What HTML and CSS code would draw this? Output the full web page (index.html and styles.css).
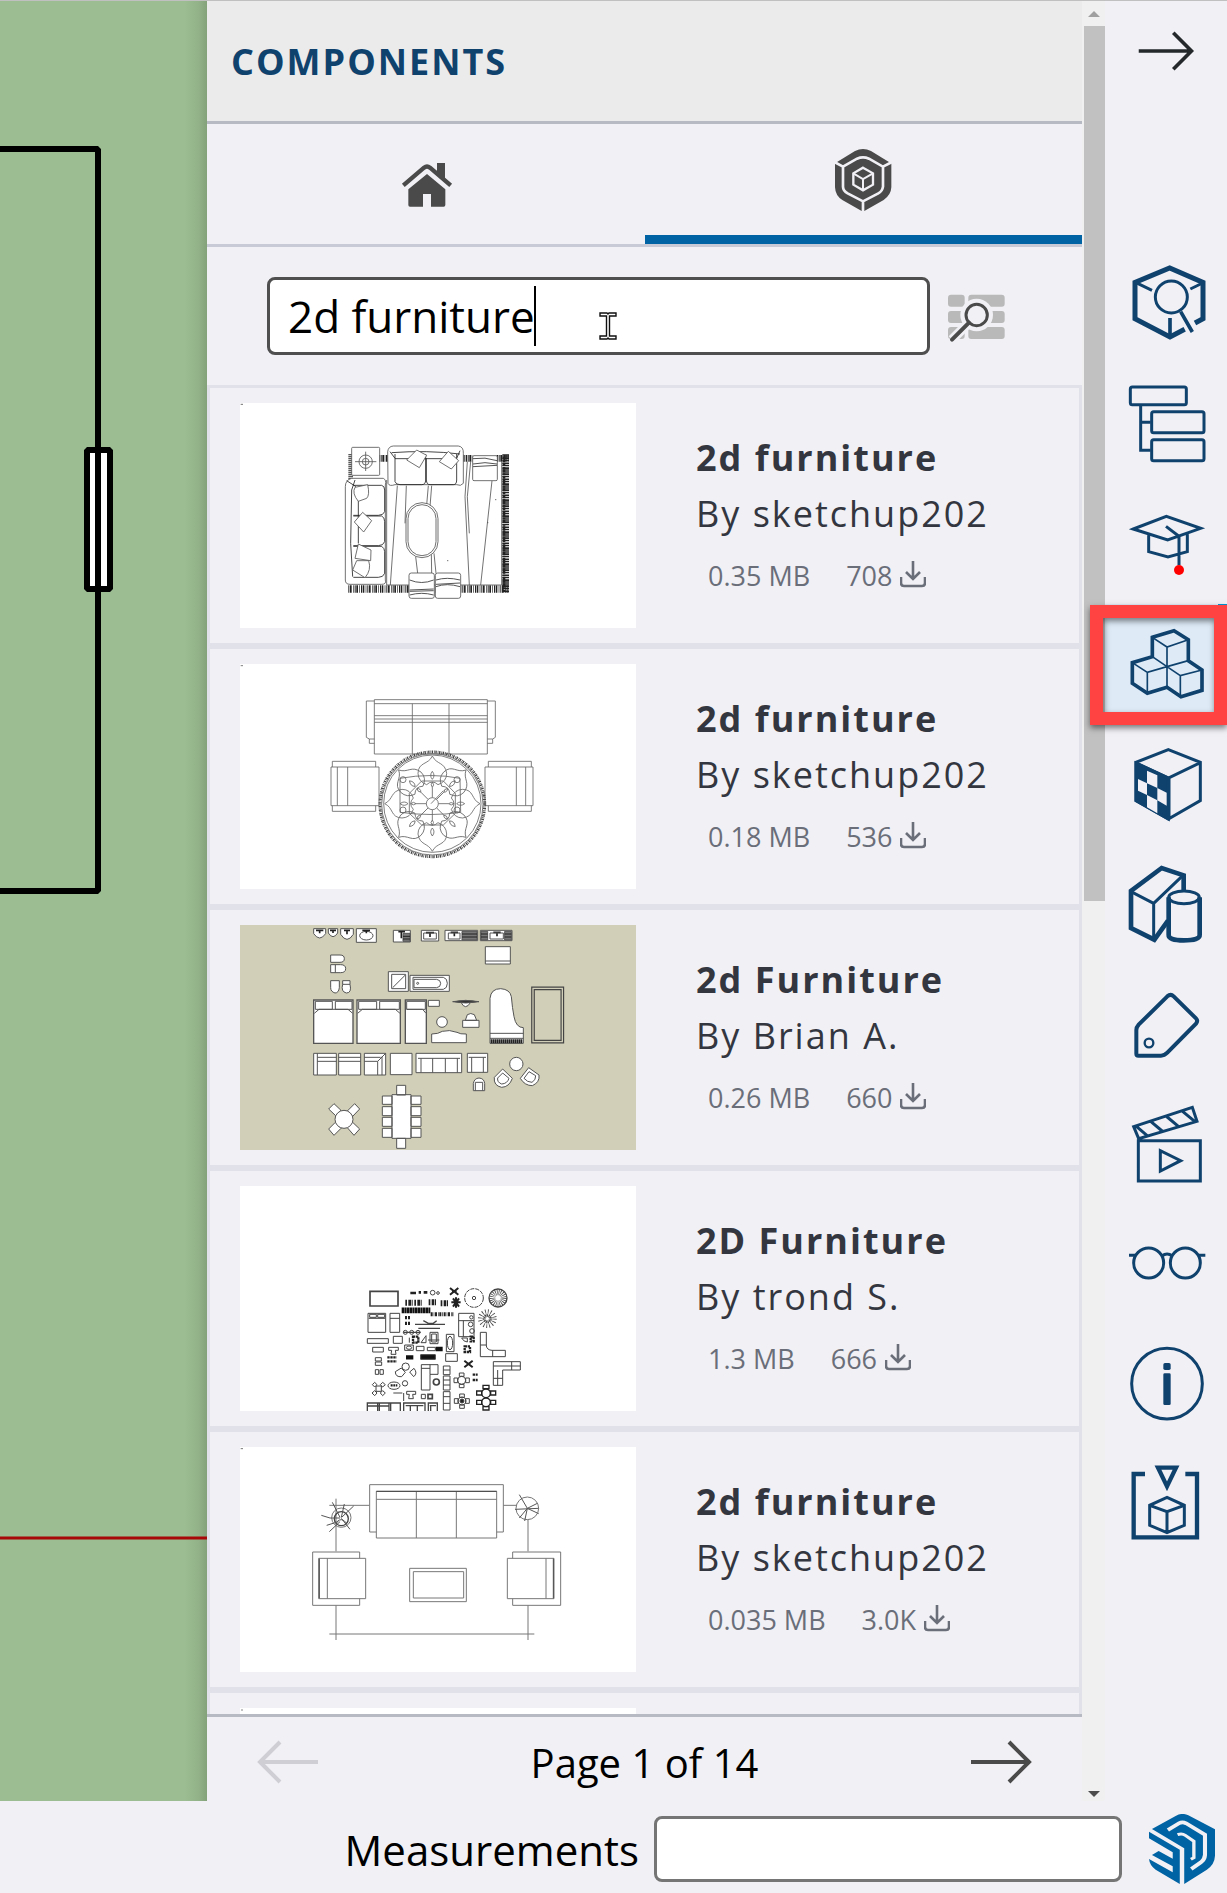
FILE: index.html
```html
<!DOCTYPE html>
<html lang="en">
<head>
<meta charset="utf-8">
<meta name="viewport" content="width=device-width, initial-scale=1">
<title>Components</title>
<link rel="stylesheet" href="styles.css">
</head>
<body>
<svg class="sprite" aria-hidden="true">
  <symbol id="download" viewBox="0 0 26 30"><path d="M13 0V18M6 11L13 18L20 11M1 16V22Q1 25 4 25H22Q25 25 25 22V16" fill="none" stroke="currentColor" stroke-width="2.6"/></symbol>
  <symbol id="arrow" viewBox="0 0 60 44"><path d="M0 22H57M38 2L58 22L38 42" fill="none" stroke="currentColor" stroke-width="4"/></symbol>
</svg>
<div class="app">
  <div class="workspace">
    <main class="canvas">
      <svg class="drawing" role="img" aria-label="Floor plan">
        <path d="M0 148H98V890H0" fill="none" stroke="#000" stroke-width="6" stroke-linejoin="bevel"/>
        <rect x="87" y="449" width="23" height="139" fill="#fff" stroke="#000" stroke-width="6" stroke-linejoin="bevel"/>
        <path d="M98 446V592" stroke="#000" stroke-width="6"/>
        <path d="M0 1537H600" stroke="#a80808" stroke-width="3"/>
      </svg>
    </main>

    <section class="panel">
      <header class="panel-header"><h1>COMPONENTS</h1></header>
      <nav class="tabs">
        <button class="tab" aria-label="Home">
          <svg viewBox="609 438 198 201" width="66" height="67" fill="#4a4a4a">
            <path d="M640 556L702 503Q711 496 720 503L782 556" fill="none" stroke="#4a4a4a" stroke-width="13"/>
            <path d="M741 489H765V536L741 516ZM711 522L766 568V615Q766 620 761 620H723V582H699V620H660Q655 620 655 615V568Z"/>
          </svg>
        </button>
        <button class="tab active" aria-label="3D Warehouse">
          <svg viewBox="387 438 198 201" width="66" height="67">
            <path d="M402 490L407 487L462 453Q486 441 510 453L565 487L571 490V562Q570 585 548 600L486 635L424 600Q403 587 402 562Z" fill="#4a4a4a"/>
            <g fill="none" stroke="#f1f0f5" stroke-width="8">
              <path d="M426 500L468 476Q486 468 504 476L546 500V560Q544 574 532 580L486 604L440 580Q426 572 426 560ZM400 486L426 500M573 486L546 500M486 604V637"/>
              <path d="M486 503L516 520V554L486 571L457 554V520Z" stroke-width="7"/>
              <path d="M457 520L486 537L516 520M486 537V571" stroke-width="6"/>
            </g>
          </svg>
        </button>
      </nav>

      <form class="search">
        <div class="search-field">
          <input type="text" value="2d furniture" aria-label="Search components">
          <span class="caret"></span>
          <svg class="ibeam" viewBox="0 0 18 28" width="18" height="28"><path d="M1 1H8L9 2L10 1H17V4H10.500V24H17V27H10L9 26L8 27H1V24H7.500V4H1Z" fill="#fff" stroke="#111" stroke-width="1.400"/></svg>
        </div>
        <button class="filter" type="button" aria-label="Advanced search">
          <svg viewBox="738 867 171 162" width="57" height="54">
            <g fill="#b9b9b9"><rect x="738" y="884" width="50" height="36" rx="9"/><rect x="799" y="884" width="109" height="36" rx="9"/><rect x="738" y="933" width="50" height="36" rx="9"/><rect x="799" y="933" width="109" height="36" rx="9"/><rect x="738" y="981" width="50" height="36" rx="9"/><rect x="799" y="981" width="109" height="36" rx="9"/></g>
            <circle cx="824" cy="945" r="49" fill="#f1f0f5"/><path d="M801 968L750 1019" stroke="#f1f0f5" stroke-width="28"/>
            <circle cx="824" cy="945" r="32" fill="none" stroke="#4a4a4a" stroke-width="9"/><path d="M801 968L750 1019" stroke="#4a4a4a" stroke-width="12" stroke-linecap="round"/>
          </svg>
        </button>
      </form>

      <div class="results">
        <article class="card">
          <svg class="thumb" viewBox="30 39 1188 675" fill="none" stroke="#555" stroke-width="2.5">
            <rect x="30" y="39" width="1188" height="675" fill="#fff" stroke="none"/>
            <g stroke="#222"><path d="M827 193V608" stroke-width="20" stroke-dasharray="4 2 2 1 5 2"/><path d="M822 200V604" stroke-width="8" stroke-dasharray="9 3 5 2"/><path d="M355 597H836" stroke-width="22" stroke-dasharray="3 2 5 4 2 3"/><path d="M446 205H480M696 205H728M800 205H836" stroke-width="20" stroke-dasharray="5 2 2 2"/><path d="M362 193V268" stroke-width="14" stroke-dasharray="3 3"/></g>
            <path d="M470 585H815V215M470 585V270M502 287L481 585M529 287L525 400M595 287L590 345M605 287L600 350M557 500L563 550M604 490L605 550M612 490L618 550M712 215L705 320L718 585M722 215L712 320L718 430M786 272L752 585"/>
            <g fill="#fff"><rect x="365" y="172" width="84" height="84" rx="3"/><rect x="728" y="197" width="74" height="75" rx="4"/>
            <path d="M473 185Q475 169 490 168H685Q701 170 700 190V280Q692 290 680 284H495Q478 290 474 280Z"/>
            <path d="M346 290Q346 270 365 265H460Q470 270 466 285V570Q470 583 455 583H360Q346 583 346 570Z"/>
            <rect x="528" y="338" width="96" height="165" rx="48"/><rect x="534" y="344" width="84" height="153" rx="42"/>
            <rect x="537" y="549" width="76" height="76" rx="7"/><rect x="616" y="549" width="76" height="76" rx="7"/></g>
            <path d="M375 215H439M407 185V243"/><circle cx="407" cy="215" r="20"/><circle cx="407" cy="215" r="10"/>
            <path d="M495 192V275Q498 284 510 284H575Q587 284 587 270V192M589 205V270Q590 284 600 284H670Q680 284 680 270V192M485 188Q590 180 690 192M495 206H680M480 185L495 205M690 182L680 205" stroke="#222"/>
            <g fill="#fff"><path d="M560 180L590 196L568 233L530 210ZM655 184L686 212L664 237L628 215Z"/></g>
            <path d="M370 286H455Q464 288 464 300V365Q460 376 445 376H370M370 378H455Q464 382 464 395V455Q460 467 445 467H370M370 469H455Q464 475 464 485V550Q460 562 445 562H370M375 270L365 300L362 460L368 560M385 300V460M350 272L378 290" stroke="#222"/>
            <g fill="#fff"><path d="M375 292L413 284Q420 315 410 325L385 334Q365 310 375 292ZM398 367L425 392L401 426L373 396ZM385 462L423 480L422 512L375 505ZM380 512H416Q425 540 405 563L368 540Z"/></g>
            <path d="M729 206Q765 200 801 212M729 222Q765 214 801 222M729 230L801 226M539 570Q575 585 611 570M539 600L611 597M539 604L611 602M539 615Q575 605 611 615M618 570Q650 560 690 570M618 583L690 579M618 590Q650 578 690 590" stroke="#333"/>
            <path d="M32 43H39M795 329H799M651 512H655M771 398H775"/>
          </svg>
          <div class="info"><h2>2d furniture</h2><p class="author">By sketchup202</p><p class="meta"><span>0.35 MB</span><span class="count">708<svg width="26" height="30"><use href="#download"/></svg></span></p></div>
        </article>

        <article class="card">
          <svg class="thumb" viewBox="30 42 1188 675" fill="none" stroke="#666" stroke-width="2.5">
            <rect x="30" y="42" width="1188" height="675" fill="#fff" stroke="none"/>
            <path d="M433 149H772V312H433ZM433 161H772M433 197H772M433 207H772M433 217H772M547 161V312M657 161V312M433 153H409V262L418 267V280H433M418 267H433M772 153H796V262L788 267V280H772M772 267H788"/>
            <path d="M303 351H447V467H303ZM307 351V334H437V351M307 467V484H437V467M322 351V467M353 351V467M765 351H909V467H765ZM775 351V334H904V351M775 467V484H904V467M859 351V467M887 351V467"/>
            <circle cx="607" cy="463" r="157" stroke="#444" stroke-width="9" stroke-dasharray="4 3 2 2"/><circle cx="607" cy="463" r="152"/><circle cx="607" cy="461" r="146"/>
            <defs><g id="petal"><path d="M607 318C595 345 565 335 564 370Q565 395 590 404Q607 388 624 404Q650 395 650 370C645 335 620 345 607 318Z"/><path d="M607 364Q617 377 607 388Q597 377 607 364ZM607 396Q615 405 607 412Q600 405 607 396ZM607 412V443"/></g></defs>
            <use href="#petal"/><use href="#petal" transform="rotate(45 607 461)"/><use href="#petal" transform="rotate(90 607 461)"/><use href="#petal" transform="rotate(135 607 461)"/><use href="#petal" transform="rotate(180 607 461)"/><use href="#petal" transform="rotate(225 607 461)"/><use href="#petal" transform="rotate(270 607 461)"/><use href="#petal" transform="rotate(315 607 461)"/>
            <circle cx="607" cy="461" r="18"/><path d="M510 385Q605 368 690 385L692 487Q605 500 510 487ZM575 393H640L676 430V490L640 525H575L538 490V430ZM603 461L640 422"/>
            <circle cx="519" cy="389" r="9"/><circle cx="681" cy="389" r="9"/><circle cx="519" cy="480" r="9"/><circle cx="681" cy="480" r="9"/><path d="M32 47H39"/>
          </svg>
          <div class="info"><h2>2d furniture</h2><p class="author">By sketchup202</p><p class="meta"><span>0.18 MB</span><span class="count">536<svg width="26" height="30"><use href="#download"/></svg></span></p></div>
        </article>

        <article class="card">
          <svg class="thumb" viewBox="30 30 1188 675" fill="#fff" stroke="#555" stroke-width="3">
            <rect x="30" y="30" width="1188" height="675" fill="#d1cfb8" stroke="none"/>
            <path d="M251 41H287V56Q269 82 251 56ZM295 41H323V54Q309 76 295 54ZM332 41H370V58Q351 88 332 58ZM379 41H439V82H379ZM490 46H541V81H490ZM574 46H626V78H574ZM645 46H743V77H645ZM751 46H846V77H751Z"/>
            <ellipse cx="409" cy="62" rx="20" ry="13"/><path d="M258 46H280M269 46V55M300 46H318M309 46V54M342 46H360M351 46V58M397 46H420M409 44V55M505 50H525M514 50V70M588 53H612M600 50V66M662 52H684M673 50V64M790 52H812M801 50V64" stroke="#222" stroke-width="5"/>
            <path d="M581 54H619V72H581ZM655 54H690V72H655ZM780 54H820V72H780Z" fill="none"/>
            <path d="M696 49H741V75H696ZM753 49H773V75H753ZM824 49H844V75H824ZM519 55H540V79H519Z" fill="#777"/><path d="M696 57H741M696 66H741M753 57H773M753 66H773M824 57H844M824 66H844M519 64H540M519 72H540" stroke="#222"/>
            <path d="M766 95H841V147H766ZM766 138H841M302 120H330Q343 120 343 131Q343 142 330 142H302ZM302 149H332Q347 149 347 161Q347 173 332 173H302ZM316 149V173M302 197H328V218Q326 234 315 234Q302 230 302 218ZM338 197H360V208Q366 234 349 234Q332 230 338 208ZM338 208H360"/>
            <path d="M475 170H535V229H475ZM485 178H527V221H485ZM488 218L525 181M540 181H658V229H540Z"/><path d="M549 187H640Q652 190 652 205Q652 220 640 223H549ZM552 193H620Q632 195 632 205Q632 217 620 218H552Z"/><circle cx="563" cy="205" r="3"/>
            <path d="M251 255H369V385H251ZM381 255H511V385H381ZM526 255H589V385H526Z" stroke-width="4"/>
            <path d="M256 259H307V283H256ZM316 259H366V283H316ZM386 259H440V283H386ZM449 259H508V283H449ZM530 259H586V283H530ZM253 295L267 283H354L368 295M383 295L397 283H496L510 295M530 283H578L588 295"/>
            <path d="M595 256H628V274H595ZM693 262Q706 288 722 262ZM698 316H747V337H698ZM706 316L712 299Q722 292 733 299L740 316ZM605 357Q625 357 637 349Q658 343 681 352Q690 358 709 357V383H605Z"/><path d="M668 260Q707 252 747 260Q707 268 668 260Z" fill="#333"/><circle cx="636" cy="321" r="16"/>
            <path d="M780 385V250Q783 221 812 221Q840 223 844 245Q847 280 852 305Q858 338 880 338V385ZM780 355H880M780 370H880"/><path d="M782 379H878" stroke="#222" stroke-width="12" stroke-dasharray="5 1"/>
            <path d="M909 220H997V380H909Z" fill="none" stroke="#444" stroke-width="11"/><path d="M909 220H997V380H909Z" fill="none" stroke="#d1cfb8" stroke-width="4"/>
            <path d="M251 415H319V480H251ZM262 415V480M262 427H319M262 439H319M326 415H392V480H326ZM326 427H392M326 439H392M403 415H467V480H403ZM403 427H452M403 439H443V480M456 425V480M443 439L467 415M481 415H546V479H481ZM558 415H695V473H558ZM564 430H690M573 430V473M608 430V473M646 430V473M682 430V473M712 415H773V472H712ZM716 427H768M725 427V472M760 427V472"/>
            <circle cx="859" cy="447" r="20"/><path d="M730 527V505Q733 490 747 489Q762 490 764 505V527ZM736 527V502H758V527"/><path d="M818 462L847 490Q838 516 815 517Q790 512 793 487ZM818 474L837 490Q832 506 815 507Q801 502 803 489ZM896 458L871 490Q884 512 907 512Q930 502 927 480ZM897 470L882 490Q892 502 906 502Q918 495 917 482Z"/>
            <path d="M312 566L333 586L317 602L296 582ZM374 566L389 582L368 604L352 588ZM296 642L316 622L333 640L312 661ZM352 638L368 622L389 642L372 661Z"/><circle cx="342" cy="613" r="27"/>
            <path d="M500 511H527V540H500ZM500 670H527V700H500ZM457 543H486V568H457ZM457 575H486V602H457ZM457 607H486V634H457ZM457 640H486V667H457ZM543 543H573V568H543ZM543 575H573V602H543ZM543 607H573V634H543ZM543 640H573V667H543ZM486 539H543V670H486Z"/>
          </svg>
          <div class="info"><h2>2d Furniture</h2><p class="author">By Brian A.</p><p class="meta"><span>0.26 MB</span><span class="count">660<svg width="26" height="30"><use href="#download"/></svg></span></p></div>
        </article>

        <article class="card">
          <svg class="thumb" viewBox="-300 -222 1188 675" fill="none" stroke="#444" stroke-width="3">
            <rect x="-300" y="-222" width="1188" height="675" fill="#fff" stroke="none"/>
            <path d="M90 94H174V138H90Z" stroke-width="5"/><path d="M84 160H137V217H84ZM86 175H135M89 163H109V172H89ZM113 163H134V172H113ZM150 160H179V217H150ZM150 175H179M82 236H145V250H82ZM160 229H187V250H160ZM98 262H130V276H98ZM146 262H175V271H166L168 283H153L155 271H146ZM317 281H352V304H317ZM194 255H220V271H194ZM229 259H252V272H229ZM270 217H294V251H270ZM275 222H289V246H275ZM319 223H342V275H319Z"/>
            <ellipse cx="330" cy="249" rx="8" ry="20"/><ellipse cx="207" cy="263" rx="8" ry="5"/>
            <path d="M185 151H271" stroke="#111" stroke-width="17" stroke-dasharray="7 1"/><path d="M272 163H340" stroke="#222" stroke-width="12" stroke-dasharray="6 3 2 2"/><path d="M287 267H308M242 291H286M198 292H220" stroke="#111" stroke-width="13"/><path d="M262 262H286V272H262ZM242 284H286V298H242Z"/>
            <path d="M196 128H245M266 127H288M302 130H325" stroke="#222" stroke-width="18" stroke-dasharray="5 4 8 2 3 5"/><path d="M211 99H228M236 97H243M251 97H262" stroke="#222" stroke-width="8"/>
            <path d="M330 84L355 104M355 84L330 104M336 94H350M334 127H362M339 115L357 140M357 115L339 140M348 112V143M373 302L398 322M398 302L373 322" stroke="#222" stroke-width="6"/>
            <circle cx="278" cy="98" r="7"/><circle cx="294" cy="99" r="4"/><circle cx="402" cy="114" r="28" stroke-dasharray="12 3"/><circle cx="402" cy="114" r="5"/>
            <circle cx="474" cy="114" r="27" stroke-width="4"/><circle cx="474" cy="114" r="17" stroke-width="18" stroke-dasharray="2 3"/><circle cx="442" cy="176" r="18" stroke-width="20" stroke-dasharray="2 5"/><circle cx="442" cy="176" r="9" stroke-width="8" stroke-dasharray="3 2"/>
            <path d="M195 173H210M195 190H210" stroke="#222" stroke-width="10" stroke-dasharray="6 3"/><path d="M225 193H315M235 205H300M250 182L265 190H280L290 182M190 217H242" stroke-width="4"/><circle cx="196" cy="217" r="6"/><circle cx="215" cy="217" r="6"/><circle cx="234" cy="217" r="6"/>
            <path d="M356 160H402V230H356ZM356 182H402M370 182V230M365 234H382V246Q370 245 365 234M421 217H439V258Q441 270 456 271H496V290H421ZM421 255H439M458 271V290M460 305H541V330H488V376H460ZM460 318H541M515 305V330M460 355H488M473 330V376"/><circle cx="394" cy="172" r="5"/><circle cx="392" cy="193" r="7"/><circle cx="396" cy="213" r="7"/>
            <path d="M374 259H390V276H374ZM392 230H401V244H392ZM219 230H235V248H219ZM142 292H170M142 304H170M398 344H413M398 360H413" stroke="#222" stroke-width="7" stroke-dasharray="7 2"/><path d="M208 233V248M243 248L258 227V248ZM264 240H298"/>
            <path d="M106 293H124V303H106ZM106 306H125V316H106ZM106 329H116V343H106ZM120 329H130V343H120ZM184 324L166 335Q166 352 185 350L196 337ZM209 336L222 325Q234 340 221 350Z"/><circle cx="197" cy="320" r="11"/>
            <path d="M244 314H294V343H270V390H244ZM244 325H270M270 314V343M310 318H330V344H310ZM310 348H330V390H310ZM310 395H330V450H310ZM310 330H330M310 360H330M310 375H330M310 410H330M310 430H330"/>
            <circle cx="289" cy="366" r="9" stroke-width="5"/><circle cx="195" cy="370" r="8"/><ellipse cx="162" cy="377" rx="18" ry="11"/><path d="M152 376H172" stroke="#222" stroke-width="7" stroke-dasharray="6 2"/>
            <path d="M104 367L111 374L104 381L97 374ZM128 367L136 374L128 381L121 374ZM104 392L111 399L104 407L96 399ZM128 392L136 399L128 407L121 399ZM108 378H124V394H108ZM160 399H187M191 399V423M200 394H227V403H218L220 416H206L208 403H200ZM244 403H256V416H244Z"/><path d="M264 403H277V416H264Z" stroke-width="5"/>
            <circle cx="365" cy="361" r="12"/><path d="M358 339H372V349H358ZM358 373H372V383H358ZM342 354H353V368H342ZM377 354H388V368H377ZM359 402H373V412H359ZM359 435H373V445H359ZM343 416H354V430H343ZM377 416H388V430H377Z"/><circle cx="366" cy="423" r="12"/><circle cx="366" cy="423" r="6" fill="#222"/>
            <g stroke="#222" stroke-width="4"><circle cx="438" cy="400" r="13"/><circle cx="438" cy="427" r="13"/><path d="M429 376H447V386H429ZM410 393H425V405H410ZM452 393H467V405H452ZM410 421H425V433H410ZM452 421H467V433H452ZM429 440H447V450H429Z"/></g>
            <path d="M82 453V429H181V453M113 431V453M118 431V453M147 431V453M152 431V453M84 438H147M191 453V429H255V453M197 437H250M211 437V453M232 437V453M265 453V429H292V453M269 437H288M272 437V453" stroke-width="4"/>
          </svg>
          <div class="info"><h2>2D Furniture</h2><p class="author">By trond S.</p><p class="meta"><span>1.3 MB</span><span class="count">666<svg width="26" height="30"><use href="#download"/></svg></span></p></div>
        </article>

        <article class="card">
          <svg class="thumb" viewBox="120 51 1188 675" fill="none" stroke="#777" stroke-width="3">
            <rect x="120" y="51" width="1188" height="675" fill="#fff" stroke="none"/>
            <path d="M529 306H509V164H910V306H890M529 184H890V324H529ZM529 208H890M649 184V324M769 184V324M388 226H508M910 226H949M408 206V364M984 268V364M408 526V630M984 526V630M388 612H1003"/>
            <path d="M479 385V366H338V526H479V506M356 385H497V506H356ZM382 385V506M938 385V366H1082V526H938V506M922 385H1062V506H922ZM1038 385V506M629 415H799V515H629ZM640 425H791V504H640Z"/>
            <path d="M529 184H890M358 386V505M1060 386V505" stroke="#444"/>
            <circle cx="982" cy="235" r="34"/><path d="M958 194L982 235M945 238L1016 235M982 235L1012 220M982 235L1016 251M982 235L958 264M982 235L974 273" stroke="#555"/>
            <circle cx="424" cy="263" r="29"/><circle cx="424" cy="266" r="21" stroke="#444" stroke-width="4"/><path d="M364 256L390 264H420M380 286L415 275M388 305L420 275M424 265L450 298M425 262L461 228M424 262L433 222M420 262L397 217M410 276Q425 260 440 280" stroke="#555"/><path d="M122 56H129"/>
          </svg>
          <div class="info"><h2>2d furniture</h2><p class="author">By sketchup202</p><p class="meta"><span>0.035 MB</span><span class="count">3.0K<svg width="26" height="30"><use href="#download"/></svg></span></p></div>
        </article>

        <article class="card">
          <svg class="thumb" viewBox="0 0 396 225"><rect width="396" height="225" fill="#fff"/><path d="M1 2H3" stroke="#888"/></svg>
        </article>
      </div>

      <footer class="pager">
        <button aria-label="Previous page" disabled><svg class="flip" width="62" height="44"><use href="#arrow"/></svg></button>
        <span>Page 1 of 14</span>
        <button aria-label="Next page"><svg width="62" height="44"><use href="#arrow"/></svg></button>
      </footer>
    </section>

    <div class="scrollbar" aria-hidden="true">
      <svg viewBox="0 0 23 25"><path d="M6 16L12 10L18 16Z" fill="#a0a0a0"/></svg>
      <div class="track"><div class="scroll-thumb"></div></div>
      <svg viewBox="0 0 23 25"><path d="M6 15L12 21L18 15Z" fill="#4c4c4c"/></svg>
    </div>

    <aside class="toolbar">
      <button class="collapse" aria-label="Collapse panel"><svg width="58" height="40"><use href="#arrow"/></svg></button>
      <button class="tool" aria-label="Entity info"><svg viewBox="75 12 366 360"><path d="M345 249L369 236V127L269 84L165 127V236L270 291L314 268" stroke-width="15"/><path d="M168 128L216 151M331 147L368 129"/><path d="M270 234V288M302 215L337 276" stroke-width="11"/><circle cx="274" cy="171" r="48"/></svg></button>
      <button class="tool" aria-label="Outliner"><svg viewBox="75 372 366 360"><rect x="151" y="441" width="168" height="53" rx="6"/><rect x="215" y="515" width="157" height="63" rx="6"/><rect x="215" y="599" width="157" height="63" rx="6"/><path d="M182 495V631H212M182 547H212"/></svg></button>
      <button class="tool" aria-label="Instructor"><svg viewBox="75 732 366 360"><path d="M160 867L259 829L362 865L263 900ZM206 882V935L264 951L322 935V880M258 859L297 889V975"/><circle cx="297" cy="990" r="15" fill="#f00" stroke="none"/></svg></button>
      <button class="tool selected" aria-label="Components"><svg viewBox="75 1092 366 360"><path d="M217 1192L282 1172L325 1199V1262L366 1290V1351L303 1370L261 1342L202 1360L157 1330V1268L217 1250Z" stroke-width="11"/><path d="M217 1192L261 1221L325 1199M261 1221V1342M157 1268L202 1297L261 1280L217 1250M202 1297V1360M325 1262L261 1280L301 1307L366 1290M301 1307V1370" stroke-width="5"/></svg><span class="marker"></span></button>
      <button class="tool" aria-label="Materials"><svg viewBox="75 -18 366 360"><path d="M168 99L265 144V267L168 212Z" fill="#10426e"/><path d="M265 59L361 97V212L265 267L168 212V97ZM168 99L265 144L361 98M267 144V267"/><path d="M201 122L232 136V174L201 160ZM174 147L201 160V195L174 182ZM232 174L260 188V227L232 211ZM201 195L232 211V250L201 232Z" fill="#f1f0f5" stroke="none"/></svg></button>
      <button class="tool" aria-label="Styles"><svg viewBox="75 342 366 360"><path d="M311 480V436L245 414L153 483V594L223 629L264 572" stroke-width="14"/><path d="M153 485L221 520L305 440M221 520V628"/><path d="M266 502V615Q265 631 311 631Q360 631 359 615V502" stroke-width="14"/><ellipse cx="312" cy="502" rx="46" ry="19"/></svg></button>
      <button class="tool" aria-label="Tags"><svg viewBox="75 702 366 360"><path d="M262 799Q272 790 281 799L348 865Q355 872 348 881L262 968Q253 977 243 977H175Q169 977 169 971V900Q169 892 176 884Z" stroke-width="12"/><circle cx="207" cy="939" r="13" stroke-width="7"/></svg></button>
      <button class="tool" aria-label="Scenes"><svg viewBox="75 1062 366 360"><path d="M161 1190L337 1132L351 1174L176 1226ZM170 1190L205 1220M212 1174L250 1206M258 1158L296 1190M305 1142L345 1175M175 1232H361V1353H175ZM241 1262V1323L302 1292Z"/></svg></button>
      <button class="tool" aria-label="Display"><svg viewBox="75 132 366 360"><circle cx="206" cy="309" r="45"/><circle cx="316" cy="309" r="45"/><path d="M147 286H166M356 286H376M246 288Q261 276 277 288"/></svg></button>
      <button class="tool" aria-label="Model info"><svg viewBox="75 492 366 360"><circle cx="261" cy="671" r="106"/><rect x="250" y="609" width="22" height="21" rx="5" fill="#10426e" stroke="none"/><rect x="250" y="640" width="22" height="95" rx="4" fill="#10426e" stroke="none"/></svg></button>
      <button class="tool" aria-label="3D print"><svg viewBox="75 852 366 360"><path d="M195 942H161V1132H351V942H316M234 923H288L261 979Z" stroke-width="13"/><path d="M261 1012L313 1036V1096L261 1118L209 1096V1036ZM209 1036L261 1055L313 1036M261 1055V1118"/></svg></button>
    </aside>
  </div>

  <footer class="status">
    <label for="measure">Measurements</label>
    <input id="measure" type="text">
    <svg class="logo" viewBox="1357 525 178 210" preserveAspectRatio="none" role="img" aria-label="SketchUp">
      <path d="M1365 570L1430 530Q1447 520 1463 529L1535 571V650Q1534 676 1513 692L1452 735V628ZM1357 578L1440 632V735L1375 692Q1359 680 1357 660L1421 700V682L1365 648L1383 636L1421 659V640L1357 598Z" fill="#0063a3"/>
      <path d="M1408 573L1438 553Q1447 547 1457 553L1508 587V648Q1507 661 1498 669L1471 690" fill="none" stroke="#f1f0f5" stroke-width="11"/>
      <path d="M1434 587Q1446 582 1455 589L1478 607V656L1470 661" fill="none" stroke="#f1f0f5" stroke-width="9"/>
    </svg>
  </footer>
</div>
</body>
</html>
```
FILE: styles.css
```css
* { box-sizing: border-box; }

body {
  margin: 0;
  background: #f1f0f5;
  color: #000;
  font-family: "Open Sans", "Noto Sans", sans-serif;
}

h1, h2, p { margin: 0; }

button {
  display: flex;
  align-items: center;
  justify-content: center;
  padding: 0;
  border: 0;
  background: none;
  color: #4a4a4a;
}

.sprite { display: none; }

.app {
  display: flex;
  flex-direction: column;
  height: 100vh;
  overflow: hidden;
  border-top: 1px solid #c0c0c0;
}

.workspace {
  flex: 1;
  min-height: 0;
  display: grid;
  grid-template-columns: minmax(0, 207fr) minmax(0, 875fr) 23px 122px;
  grid-template-rows: minmax(0, 1fr);
}

/* Drawing area */
.canvas {
  background: linear-gradient(to left, #84a27a, #92b188 8px, #9bbd91 22px);
}

.drawing {
  display: block;
  width: 100%;
  height: 100%;
}

/* Components panel */
.panel {
  display: flex;
  flex-direction: column;
  min-height: 0;
}

.panel-header {
  height: 123px;
  padding: 37px 24px;
  background: #ebebeb;
  border-bottom: 3px solid #b7b9c3;
}

.panel-header h1 {
  color: #10426e;
  font-size: 36px;
  line-height: 48px;
  letter-spacing: 2px;
}

.tabs {
  display: flex;
  border-bottom: 3px solid #c8cad6;
}

.tab {
  flex: 1;
  height: 120px;
  border-bottom: 9px solid transparent;
}

.tab.active { border-bottom-color: #0063a3; }

.search {
  display: flex;
  align-items: center;
  gap: 18px;
  padding: 30px 77px 30px 60px;
}

.search-field {
  position: relative;
  flex: 1;
}

input {
  font: inherit;
  color: #000;
  background: #fff;
  border-radius: 8px;
}

.search-field input {
  display: block;
  width: 100%;
  height: 78px;
  padding: 0 18px;
  border: 3px solid #4f4f4f;
  font-size: 44px;
}

.caret {
  position: absolute;
  left: 267px;
  top: 9px;
  width: 2px;
  height: 60px;
  background: #000;
}

.ibeam {
  position: absolute;
  left: 332px;
  top: 35px;
}

.results {
  flex: 1;
  min-height: 0;
  overflow: hidden;
}

.card {
  display: flex;
  gap: 60px;
  padding: 15px 30px;
  border: 3px solid #e1e1e9;
}

.thumb {
  flex: none;
  display: block;
  width: 396px;
  height: 225px;
}

.info {
  padding-top: 27px;
  color: #33363f;
  font-size: 36px;
  line-height: 56px;
  letter-spacing: 2px;
  white-space: nowrap;
}

.info h2 { font-size: inherit; }

.meta {
  display: flex;
  gap: 36px;
  padding: 6px 12px;
  color: #6a6e79;
  font-size: 27px;
  letter-spacing: normal;
}

.count {
  display: flex;
  align-items: center;
  gap: 8px;
}

.pager {
  flex: none;
  display: flex;
  align-items: center;
  justify-content: space-between;
  height: 87px;
  padding: 6px 50px 0;
  border-top: 3px solid #b7b9c3;
  font-size: 40px;
}

.pager button:disabled { color: #cfced5; }

.flip { transform: scaleX(-1); }

/* Scrollbar */
.scrollbar {
  display: flex;
  flex-direction: column;
  background: #f0f0f0;
}

.track {
  flex: 1;
  padding-left: 2px;
}

.scroll-thumb {
  height: 50%;
  background: #c1c1c1;
}

/* Right toolbar */
.collapse {
  width: 100%;
  height: 100px;
  margin-bottom: 143px;
  color: #25282b;
}

.tool {
  position: relative;
  width: 100%;
  height: 120px;
}

.tool svg {
  width: 122px;
  height: 120px;
  fill: none;
  stroke: #10426e;
  stroke-width: 9;
}

.tool.selected {
  background: linear-gradient(#0096d6, #0096d6) top right / 9px 1px no-repeat #deebf7;
}

.marker {
  position: absolute;
  inset: 1px 0 -1px -15px;
  border: 13px solid #ff4343;
  box-shadow: 0 3px 6px rgba(0, 0, 0, .5), inset 1px 3px 6px rgba(0, 0, 0, .5);
}

/* Status bar */
.status {
  display: flex;
  align-items: center;
  justify-content: flex-end;
  height: 92px;
  padding: 4px 12px 0 24px;
  font-size: 42px;
}

.status input {
  width: 468px;
  height: 66px;
  margin: 0 27px 0 15px;
  border: 3px solid #757575;
}

.logo {
  width: 66px;
  height: 70px;
}
```
